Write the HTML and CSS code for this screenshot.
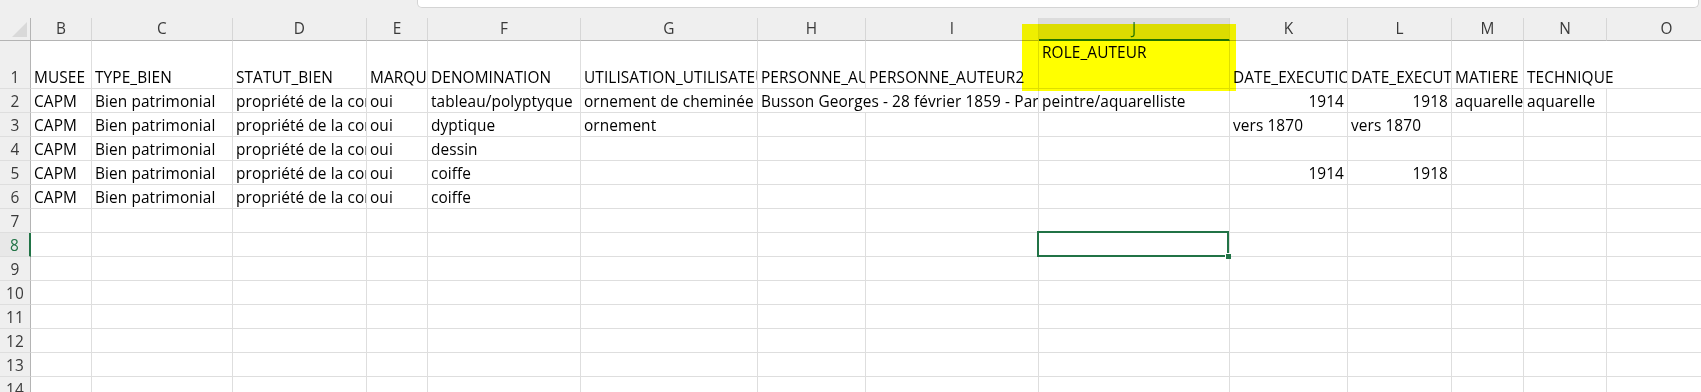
FILE: index.html
```html
<!DOCTYPE html>
<html lang="fr">
<head>
    <meta charset="UTF-8">
    <title>Classeur - Biens patrimoniaux</title>
    <link rel="stylesheet" href="styles.css">
</head>
<body>
    <div class="topbar">
        <div class="formula-box"></div>
    </div>

    <div class="sheet">
        <!-- en-têtes de colonnes -->
        <div class="corner">
            <svg width="15" height="15" viewBox="0 0 15 15"><polygon points="15,0 15,15 0,15" fill="#d9d9d9"/></svg>
        </div>
        <div class="colhead">B</div>
        <div class="colhead">C</div>
        <div class="colhead">D</div>
        <div class="colhead">E</div>
        <div class="colhead">F</div>
        <div class="colhead">G</div>
        <div class="colhead">H</div>
        <div class="colhead">I</div>
        <div class="colhead active">J</div>
        <div class="colhead">K</div>
        <div class="colhead">L</div>
        <div class="colhead">M</div>
        <div class="colhead">N</div>
        <div class="colhead">O</div>

        <!-- ligne 1 -->
        <div class="rowhead">1</div>
        <div class="cell">MUSEE</div>
        <div class="cell">TYPE_BIEN</div>
        <div class="cell">STATUT_BIEN</div>
        <div class="cell">MARQUE</div>
        <div class="cell">DENOMINATION</div>
        <div class="cell">UTILISATION_UTILISATEUR</div>
        <div class="cell">PERSONNE_AUTEUR1</div>
        <div class="cell">PERSONNE_AUTEUR2</div>
        <div class="cell top">ROLE_AUTEUR</div>
        <div class="cell">DATE_EXECUTION_DEBUT</div>
        <div class="cell">DATE_EXECUTION_FIN</div>
        <div class="cell">MATIERE</div>
        <div class="cell span2">TECHNIQUE</div>

        <!-- ligne 2 -->
        <div class="rowhead">2</div>
        <div class="cell">CAPM</div>
        <div class="cell">Bien patrimonial</div>
        <div class="cell">propriété de la commune</div>
        <div class="cell">oui</div>
        <div class="cell">tableau/polyptyque</div>
        <div class="cell">ornement de cheminée</div>
        <div class="cell span2">Busson Georges - 28 février 1859 - Paris</div>
        <div class="cell">peintre/aquarelliste</div>
        <div class="cell num">1914</div>
        <div class="cell num">1918</div>
        <div class="cell">aquarelle</div>
        <div class="cell">aquarelle</div>
        <div class="cell"></div>

        <!-- ligne 3 -->
        <div class="rowhead">3</div>
        <div class="cell">CAPM</div>
        <div class="cell">Bien patrimonial</div>
        <div class="cell">propriété de la commune</div>
        <div class="cell">oui</div>
        <div class="cell">dyptique</div>
        <div class="cell">ornement</div>
        <div class="cell"></div>
        <div class="cell"></div>
        <div class="cell"></div>
        <div class="cell">vers 1870</div>
        <div class="cell">vers 1870</div>
        <div class="cell"></div>
        <div class="cell"></div>
        <div class="cell"></div>

        <!-- ligne 4 -->
        <div class="rowhead">4</div>
        <div class="cell">CAPM</div>
        <div class="cell">Bien patrimonial</div>
        <div class="cell">propriété de la commune</div>
        <div class="cell">oui</div>
        <div class="cell">dessin</div>
        <div class="cell"></div>
        <div class="cell"></div>
        <div class="cell"></div>
        <div class="cell"></div>
        <div class="cell"></div>
        <div class="cell"></div>
        <div class="cell"></div>
        <div class="cell"></div>
        <div class="cell"></div>

        <!-- ligne 5 -->
        <div class="rowhead">5</div>
        <div class="cell">CAPM</div>
        <div class="cell">Bien patrimonial</div>
        <div class="cell">propriété de la commune</div>
        <div class="cell">oui</div>
        <div class="cell">coiffe</div>
        <div class="cell"></div>
        <div class="cell"></div>
        <div class="cell"></div>
        <div class="cell"></div>
        <div class="cell num">1914</div>
        <div class="cell num">1918</div>
        <div class="cell"></div>
        <div class="cell"></div>
        <div class="cell"></div>

        <!-- ligne 6 -->
        <div class="rowhead">6</div>
        <div class="cell">CAPM</div>
        <div class="cell">Bien patrimonial</div>
        <div class="cell">propriété de la commune</div>
        <div class="cell">oui</div>
        <div class="cell">coiffe</div>
        <div class="cell"></div>
        <div class="cell"></div>
        <div class="cell"></div>
        <div class="cell"></div>
        <div class="cell"></div>
        <div class="cell"></div>
        <div class="cell"></div>
        <div class="cell"></div>
        <div class="cell"></div>
    </div>

    <div class="highlight"></div>

    <script>
        // lignes vides 7 à 14, J8 sélectionnée
        const sheet = document.querySelector('.sheet');
        for (let r = 7; r <= 14; r++) {
            const head = document.createElement('div');
            head.className = 'rowhead' + (r === 8 ? ' active' : '');
            head.textContent = r;
            sheet.appendChild(head);
            for (let c = 0; c < 14; c++) {
                const cell = document.createElement('div');
                cell.className = 'cell';
                if (r === 8 && c === 8) {
                    cell.innerHTML = '<div class="selection"><span class="fill-handle"></span></div>';
                }
                sheet.appendChild(cell);
            }
        }
    </script>
</body>
</html>
```

FILE: styles.css
```css
html, body {
    height: 100%;
}

body {
    margin: 0;
    overflow: hidden;
    position: relative;
    background-color: #efefef;
    font-family: "Open Sans", "Liberation Sans", sans-serif;
    font-size: 15.4px;
    letter-spacing: 0.1px;
    line-height: 20px;
    color: #000;
}

.topbar {
    height: 8px;
    margin-bottom: 10px;
}

.formula-box {
    margin-left: 417px;
    width: 1280px;
    height: 7px;
    background-color: #fff;
    border: 1px solid #d4d4d4;
    border-top: none;
    border-radius: 0 0 5px 5px;
}

.sheet {
    display: grid;
    grid-template-columns: 31px 61px 141px 134px 61px 153px 177px 108px 173px 191px 118px 104px 72px 83px 120px;
    grid-template-rows: 23px 48px repeat(13, 24px);
    width: 1727px;
}

.sheet > div {
    box-sizing: border-box;
    min-width: 0;
}

.corner {
    display: flex;
    justify-content: flex-end;
    align-items: flex-end;
    padding: 0 3px 3px 0;
    border-right: 1px solid #b4b4b4;
    border-bottom: 1px solid #b4b4b4;
}

.corner svg {
    display: block;
}

.colhead {
    display: flex;
    justify-content: center;
    align-items: center;
    color: #3a3a3a;
    border-right: 1px solid #d6d6d6;
    border-bottom: 1px solid #b4b4b4;
}

.colhead.active {
    background-color: #dcdcdc;
    color: #217346;
    border-bottom: 2px solid #217346;
    padding-top: 1px;
}

.rowhead {
    display: flex;
    justify-content: center;
    align-items: flex-end;
    color: #3a3a3a;
    border-right: 1px solid #b4b4b4;
    border-bottom: 1px solid #dedede;
}

.rowhead.active {
    background-color: #e8e8e8;
    color: #217346;
    border-right: 2px solid #217346;
}

.cell {
    display: flex;
    align-items: flex-end;
    padding: 0 3px;
    background-color: #fff;
    border-right: 1px solid #dedede;
    border-bottom: 1px solid #dedede;
    white-space: nowrap;
    overflow: hidden;
}

.cell.top {
    align-items: flex-start;
    padding-top: 2px;
}

.cell.num {
    justify-content: flex-end;
}

.cell.span2 {
    grid-column: span 2;
}

.sheet > .cell:has(.selection) {
    position: relative;
    overflow: visible;
}

.selection {
    position: absolute;
    top: -2px;
    left: -2px;
    right: 0;
    bottom: -1px;
    border: 2px solid #217346;
    z-index: 2;
}

.fill-handle {
    position: absolute;
    right: -4px;
    bottom: -4px;
    width: 5px;
    height: 5px;
    background-color: #217346;
    border-left: 1px solid #fff;
    border-top: 1px solid #fff;
}

.highlight {
    position: absolute;
    left: 1022px;
    top: 24px;
    width: 214px;
    height: 67px;
    background-color: #ffff00;
    mix-blend-mode: multiply;
    z-index: 3;
}
```
